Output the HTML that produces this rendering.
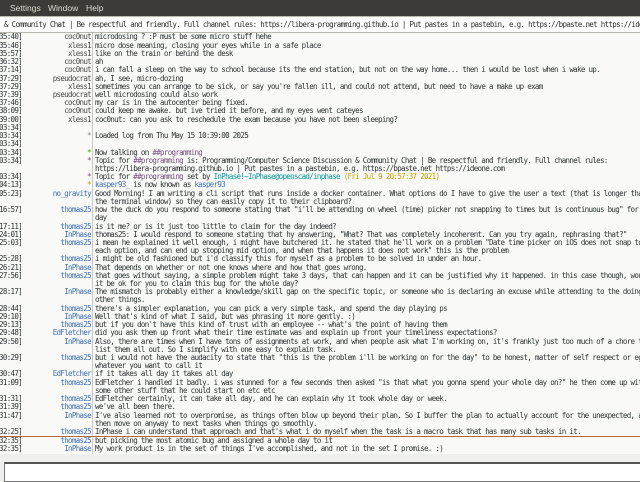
<!DOCTYPE html>
<html><head><meta charset="utf-8">
<style>
*{margin:0;padding:0;box-sizing:border-box}
body{width:640px;height:480px;overflow:hidden;background:#efefed;position:relative;font-family:"DejaVu Sans Mono","Liberation Mono",monospace}
#menu{position:absolute;left:0;top:0;width:640px;height:16px;background:#3c3b37;color:#dfdbd2;font-family:"Liberation Sans",sans-serif;font-size:8.5px;line-height:16px;white-space:nowrap}
#menu span{position:absolute;top:0}
#topic{position:absolute;left:0;top:16px;width:640px;height:17px;background:#fff;border-top:1px solid #b9b7b2;border-bottom:1px solid #b9b7b2;font-size:7.5px;letter-spacing:-0.69px;line-height:15px;padding-left:4px;white-space:nowrap;overflow:hidden;color:#2e2e2e}
#chat{position:absolute;left:0;top:33px;width:640px;height:421px;background:#f9f9f7;overflow:hidden}
#sep{position:absolute;left:92px;top:0;width:1px;height:421px;background:#c8c8c4}
.r{position:absolute;left:0;height:8.22px;width:640px;font-size:7.5px;letter-spacing:-0.69px;line-height:8.22px;white-space:nowrap;color:#2e3436}
.t{position:absolute;right:618px;color:#2e3436}
.n{position:absolute;right:549px;color:#4a4a4a}
.m{position:absolute;left:95px}
.b{color:#3f6fb3}
.g{color:#4e9a06}
.p{color:#75507b}
.o{color:#c4a000}
.c{color:#06989a}
#marker{position:absolute;left:0;top:436px;width:640px;height:1px;background:#b46a3c}
#inp{position:absolute;left:4px;top:462px;width:640px;height:20px;background:#fff;border:1px solid #777;border-top:2px solid #555}
</style></head><body>
<div id="menu"><span style="left:-3px">r</span><span style="left:10px">Settings</span><span style="left:48px">Window</span><span style="left:86px">Help</span></div>
<div id="topic">&amp; Community Chat | Be respectful and friendly. Full channel rules: https://libera-programming.github.io | Put pastes in a pastebin, e.g. https://bpaste.net https://ideone.com</div>
<div id="chat"><div id="sep"></div></div>
<div id="marker"></div>
<div id="inp"></div>
<div style="position:absolute;left:0;top:0">
<div class="r" style="top:33.4px"><span class="t">[35:40]</span><span class="n">coc0nut</span><span class="m">microdosing ? :P must be some micro stuff hehe</span></div>
<div class="r" style="top:41.6px"><span class="t">[35:46]</span><span class="n">xless1</span><span class="m">micro dose meaning, closing your eyes while in a safe place</span></div>
<div class="r" style="top:49.8px"><span class="t">[35:57]</span><span class="n">xless1</span><span class="m">like on the train or behind the desk</span></div>
<div class="r" style="top:58.1px"><span class="t">[36:32]</span><span class="n">coc0nut</span><span class="m">ah</span></div>
<div class="r" style="top:66.3px"><span class="t">[37:14]</span><span class="n">coc0nut</span><span class="m">i can fall a sleep on the way to school because its the end station, but not on the way home... then i would be lost when i wake up.</span></div>
<div class="r" style="top:74.5px"><span class="t">[37:29]</span><span class="n">pseudocrat</span><span class="m">ah, I see, micro-dozing</span></div>
<div class="r" style="top:82.7px"><span class="t">[37:29]</span><span class="n">xless1</span><span class="m">sometimes you can arrange to be sick, or say you're fallen ill, and could not attend, but need to have a make up exam</span></div>
<div class="r" style="top:90.9px"><span class="t">[37:39]</span><span class="n">pseudocrat</span><span class="m">well microdosing could also work</span></div>
<div class="r" style="top:99.2px"><span class="t">[37:46]</span><span class="n">coc0nut</span><span class="m">my car is in the autocenter being fixed.</span></div>
<div class="r" style="top:107.4px"><span class="t">[38:09]</span><span class="n">coc0nut</span><span class="m">could keep me awake. but ive tried it before, and my eyes went cateyes</span></div>
<div class="r" style="top:115.6px"><span class="t">[39:00]</span><span class="n">xless1</span><span class="m">coc0nut: can you ask to reschedule the exam because you have not been sleeping?</span></div>
<div class="r" style="top:123.8px"><span class="t">[03:34]</span></div>
<div class="r" style="top:132.0px"><span class="t">[03:34]</span><span class="n" style="color:#888">*</span><span class="m">Loaded log from Thu May 15 10:39:00 2025</span></div>
<div class="r" style="top:140.3px"><span class="t">[03:34]</span></div>
<div class="r" style="top:148.5px"><span class="t">[03:34]</span><span class="n g">*</span><span class="m">Now talking on <span class="p">##programming</span></span></div>
<div class="r" style="top:156.7px"><span class="t">[03:34]</span><span class="n p">*</span><span class="m">Topic for <span class="p">##programming</span> is: Programming/Computer Science Discussion &amp; Community Chat | Be respectful and friendly. Full channel rules:</span></div>
<div class="r" style="top:164.9px"><span class="m">https://libera-programming.github.io | Put pastes in a pastebin, e.g. https://bpaste.net https://ideone.com</span></div>
<div class="r" style="top:173.1px"><span class="t">[03:34]</span><span class="n p">*</span><span class="m">Topic for <span class="p">##programming</span> set by <span class="c">InPhase!~InPhase@openscad/inphase</span> <span class="o">(Fri Jul  9 20:57:37 2021)</span></span></div>
<div class="r" style="top:181.4px"><span class="t">[04:13]</span><span class="n o">*</span><span class="m"><span class="b">kasper93_</span> is now known as <span class="b">kasper93</span></span></div>
<div class="r" style="top:189.6px"><span class="t">[05:23]</span><span class="n b">no_gravity</span><span class="m">Good Morning! I am writing a cli script that runs inside a docker container. What options do I have to give the user a text (that is longer than</span></div>
<div class="r" style="top:197.8px"><span class="m">the terminal window) so they can easily copy it to their clipboard?</span></div>
<div class="r" style="top:206.0px"><span class="t">[16:57]</span><span class="n b">thomas25</span><span class="m">how the duck do you respond to someone stating that "i'll be attending on wheel (time) picker not snapping to times but is continuous bug" for the</span></div>
<div class="r" style="top:214.2px"><span class="m">day</span></div>
<div class="r" style="top:222.5px"><span class="t">[17:11]</span><span class="n b">thomas25</span><span class="m">is it me? or is it just too little to claim for the day indeed?</span></div>
<div class="r" style="top:230.7px"><span class="t">[24:01]</span><span class="n b">InPhase</span><span class="m">thomas25: I would respond to someone stating that hy answering, "What?  That was completely incoherent.  Can you try again, rephrasing that?"</span></div>
<div class="r" style="top:238.9px"><span class="t">[25:03]</span><span class="n b">thomas25</span><span class="m">i mean he explained it well enough, i might have butchered it. he stated that he'll work on a problem "Date time picker on iOS does not snap to</span></div>
<div class="r" style="top:247.1px"><span class="m">each option, and can end up stopping mid option, and when that happens it does not work" this is the problem</span></div>
<div class="r" style="top:255.3px"><span class="t">[25:28]</span><span class="n b">thomas25</span><span class="m">i might be old fashioned but i'd classify this for myself as a problem to be solved in under an hour.</span></div>
<div class="r" style="top:263.6px"><span class="t">[26:21]</span><span class="n b">InPhase</span><span class="m">That depends on whether or not one knows where and how that goes wrong.</span></div>
<div class="r" style="top:271.8px"><span class="t">[27:56]</span><span class="n b">thomas25</span><span class="m">that goes without saying, a simple problem might take 3 days, that can happen and it can be justified why it happened. in this case though, would</span></div>
<div class="r" style="top:280.0px"><span class="m">it be ok for you to claim this bug for the whole day?</span></div>
<div class="r" style="top:288.2px"><span class="t">[28:17]</span><span class="n b">InPhase</span><span class="m">The mismatch is probably either a knowledge/skill gap on the specific topic, or someone who is declaring an excuse while attending to the doing</span></div>
<div class="r" style="top:296.4px"><span class="m">other things.</span></div>
<div class="r" style="top:304.7px"><span class="t">[28:44]</span><span class="n b">thomas25</span><span class="m">there's a simpler explanation, you can pick a very simple task, and spend the day playing ps</span></div>
<div class="r" style="top:312.9px"><span class="t">[29:10]</span><span class="n b">InPhase</span><span class="m">Well that's kind of what I said, but was phrasing it more gently.  :)</span></div>
<div class="r" style="top:321.1px"><span class="t">[29:13]</span><span class="n b">thomas25</span><span class="m">but if you don't have this kind of trust with an employee -- what's the point of having them</span></div>
<div class="r" style="top:329.3px"><span class="t">[29:48]</span><span class="n b">EdFletcher</span><span class="m">did you ask them up front what their time estimate was and explain up front your timeliness expectations?</span></div>
<div class="r" style="top:337.5px"><span class="t">[29:50]</span><span class="n b">InPhase</span><span class="m">Also, there are times when I have tons of assignments at work, and when people ask what I'm working on, it's frankly just too much of a chore to</span></div>
<div class="r" style="top:345.8px"><span class="m">list them all out.  So I simplify with one easy to explain task.</span></div>
<div class="r" style="top:354.0px"><span class="t">[30:29]</span><span class="n b">thomas25</span><span class="m">but i would not have the audacity to state that "this is the problem i'll be working on for the day" to be honest, matter of self respect or ego,</span></div>
<div class="r" style="top:362.2px"><span class="m">whatever you want to call it</span></div>
<div class="r" style="top:370.4px"><span class="t">[30:47]</span><span class="n b">EdFletcher</span><span class="m">if it takes all day it takes all day</span></div>
<div class="r" style="top:378.6px"><span class="t">[31:09]</span><span class="n b">thomas25</span><span class="m">EdFletcher i handled it badly. i was stunned for a few seconds then asked "is that what you gonna spend your whole day on?" he then come up with</span></div>
<div class="r" style="top:386.9px"><span class="m">some other stuff that he could start on etc etc</span></div>
<div class="r" style="top:395.1px"><span class="t">[31:31]</span><span class="n b">thomas25</span><span class="m">EdFletcher certainly, it can take all day, and he can explain why it took whole day or week.</span></div>
<div class="r" style="top:403.3px"><span class="t">[31:39]</span><span class="n b">thomas25</span><span class="m">we've all been there.</span></div>
<div class="r" style="top:411.5px"><span class="t">[31:47]</span><span class="n b">InPhase</span><span class="m">I've also learned not to overpromise, as things often blow up beyond their plan.  So I buffer the plan to actually account for the unexpected, and</span></div>
<div class="r" style="top:419.7px"><span class="m">then move on anyway to next tasks when things go smoothly.</span></div>
<div class="r" style="top:428.0px"><span class="t">[32:25]</span><span class="n b">thomas25</span><span class="m">InPhase i can understand that approach and that's what i do myself when the task is a macro task that has many sub tasks in it.</span></div>
<div class="r" style="top:436.6px"><span class="t">[32:35]</span><span class="n b">thomas25</span><span class="m">but picking the most atomic bug and assigned a whole day to it</span></div>
<div class="r" style="top:444.8px"><span class="t">[32:35]</span><span class="n b">InPhase</span><span class="m">My work product is in the set of things I've accomplished, and not in the set I promise.  :)</span></div>
</div>
</body></html>
